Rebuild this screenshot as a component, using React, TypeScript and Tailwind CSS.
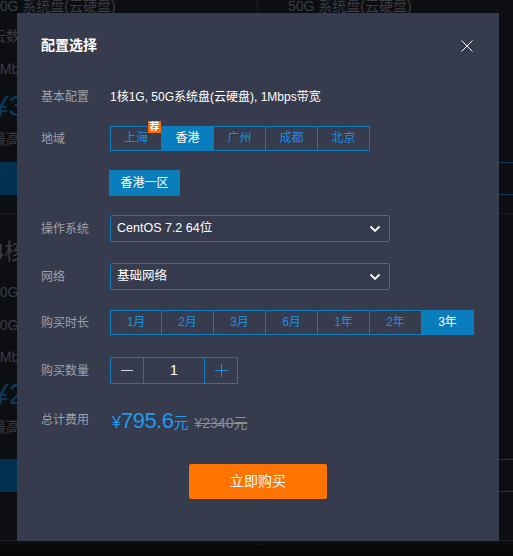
import { useState } from "react";

const FONT = { fontFamily: '"Liberation Sans", "Noto Sans CJK SC", sans-serif' };

const regions = ["上海", "香港", "广州", "成都", "北京"];
const durations = ["1月", "2月", "3月", "6月", "1年", "2年", "3年"];

interface TabGroupProps {
    items: string[];
    active: string;
    onChange: (value: string) => void;
    badge?: string;
}

const TabGroup = ({ items, active, onChange, badge }: TabGroupProps) => (
    <div className="flex">
        {items.map((item, i) => (
            <button
                key={item}
                onClick={() => onChange(item)}
                className={`relative w-[52px] h-[25px] border-y border-r border-[#0b7cc0] text-[12px] leading-[23px] ${
                    i === 0 ? "border-l" : ""
                } ${active === item ? "bg-[#0a7dbd] text-white" : "text-[#1a8fe3]"}`}
            >
                {item}
                {badge === item && (
                    <span className="absolute -top-[6px] right-0 w-[13px] h-[12px] bg-[#ff6a00] text-white text-[10px] leading-[12px] font-bold">
                        荐
                    </span>
                )}
            </button>
        ))}
    </div>
);

const Chevron = () => (
    <svg width="12" height="8" viewBox="0 0 12 8" fill="none">
        <path d="M1.5 1.5 6 6l4.5-4.5" stroke="white" strokeWidth="1.8" />
    </svg>
);

const Select = ({ value }: { value: string }) => (
    <div className="w-[280px] h-[27px] border border-[#0b7cc0] rounded-[2px] flex items-center justify-between pl-[6px] pr-[8px]">
        <span className="text-white text-[12.5px]">{value}</span>
        <Chevron />
    </div>
);

const Row = ({ label, className, children }: { label: string; className: string; children: React.ReactNode }) => (
    <div className={`flex items-center ${className}`}>
        <div className="w-[69px] text-[12px] text-[#9da1ab]">{label}</div>
        {children}
    </div>
);

// dimmed pricing cards behind the dialog
const Card = ({ blueBand, big, hidden }: { blueBand?: boolean; big?: string; hidden?: boolean }) => {
    const line = (text: string) => (hidden ? "" : text);
    return (
        <div className={`flex flex-col pl-[30px] border-b border-[#1b1d23] ${big ? "h-[327px] pt-[24px]" : "h-[218px] -mt-[4px]"}`}>
            {big && <div className="h-[28px] text-[22px] leading-[28px]">{line(`${big} 8G`)}</div>}
            <div className={`h-[20px] leading-[20px] ${big ? "mt-[16px]" : ""}`}>
                {big ? line("50G 系统盘") : "50G 系统盘(云硬盘)"}
            </div>
            {big && <div className="h-[20px] leading-[20px] mt-[13px]">{line("50G 数据盘")}</div>}
            {!big && <div className="h-[20px] leading-[20px] mt-[10px]">{line("云数据库")}</div>}
            <div className={`h-[20px] leading-[20px] ${big ? "mt-[12px]" : "mt-[13px]"}`}>{line("1Mbps")}</div>
            <div className="h-[30px] leading-[30px] text-[30px] text-[#0b3a5c] mt-[12px]">{line(big ? "¥28" : "¥37")}</div>
            <div className="h-[20px] leading-[20px] mt-[8px]">{line("最高可省")}</div>
            <div
                className={`h-[33px] mr-[-40px] flex items-center justify-end pr-[12px] text-[14px] text-[#0b4a72] ${
                    big ? "mt-[22px]" : "mt-[13px]"
                } ${blueBand ? "bg-[#003150]" : "border-y border-[#0a3c5e]"}`}
            >
                {hidden ? "选" : ""}
            </div>
        </div>
    );
};

const Background = () => (
    <div className="flex w-[600px] -ml-[38px] h-[545px] text-[#3a3d44] text-[14px]">
        <div className="w-[296px] border-r border-[#1b1d23] flex flex-col">
            <Card blueBand />
            <Card blueBand big="4核" />
        </div>
        <div className="w-[300px] flex flex-col">
            <Card hidden />
            <Card hidden big="4核" />
        </div>
    </div>
);

export default function App() {
    const [region, setRegion] = useState("香港");
    const [duration, setDuration] = useState("3年");
    const [count, setCount] = useState(1);

    return (
        <div style={FONT} className="relative w-[513px] h-[556px] bg-[#07080a] overflow-hidden">
            <div className="bg-[#0d0e12] h-[545px] overflow-hidden">
                <Background />
            </div>

            <div className="absolute left-[17px] top-[13px] w-[482px] h-[528px] bg-[#363b4d] pl-[24px] flex flex-col">
                <button className="absolute top-[27px] right-[26px] w-[12px] h-[12px]">
                    <svg width="12" height="12" viewBox="0 0 12 12">
                        <path d="M0.5 0.5 11.5 11.5M11.5 0.5 0.5 11.5" stroke="white" strokeWidth="1" />
                    </svg>
                </button>

                <div className="mt-[22px] h-[20px] text-white text-[14px] font-bold leading-[20px]">配置选择</div>

                <Row label="基本配置" className="mt-[32px] h-[20px]">
                    <span className="text-white text-[12px]">1核1G, 50G系统盘(云硬盘), 1Mbps带宽</span>
                </Row>

                <Row label="地域" className="mt-[19px]">
                    <TabGroup items={regions} active={region} onChange={setRegion} badge="上海" />
                </Row>

                <div className="mt-[19px] ml-[68px]">
                    <button className="w-[71px] h-[26px] bg-[#0a7dbd] text-white text-[12px]">香港一区</button>
                </div>

                <Row label="操作系统" className="mt-[19px]">
                    <Select value="CentOS 7.2 64位" />
                </Row>

                <Row label="网络" className="mt-[21px]">
                    <Select value="基础网络" />
                </Row>

                <Row label="购买时长" className="mt-[20px]">
                    <TabGroup items={durations} active={duration} onChange={setDuration} />
                </Row>

                <Row label="购买数量" className="mt-[22px]">
                    <div className="flex h-[27px] border border-[#0b7cc0]">
                        <button
                            onClick={() => setCount(Math.max(1, count - 1))}
                            className="w-[33px] flex items-center justify-center border-r border-[#0b7cc0]"
                        >
                            <span className="block w-[12px] h-[1px] bg-[#d6d8dd]" />
                        </button>
                        <div className="w-[60px] flex items-center justify-center text-white text-[14px]">{count}</div>
                        <button
                            onClick={() => setCount(count + 1)}
                            className="w-[33px] flex items-center justify-center border-l border-[#0b7cc0]"
                        >
                            <svg width="13" height="13" viewBox="0 0 13 13">
                                <path d="M6.5 0v13M0 6.5h13" stroke="#1a8fe3" strokeWidth="1" />
                            </svg>
                        </button>
                    </div>
                </Row>

                <Row label="总计费用" className="mt-[21px] h-[30px]">
                    <div className="flex items-baseline text-[#1e9bf0] ml-[2px]">
                        <span className="text-[16px]">¥</span>
                        <span className="text-[22px] tracking-[-0.5px]">795.6</span>
                        <span className="text-[15px]">元</span>
                        <span className="ml-[6px] text-[14px] text-[#8b8f98] line-through">¥2340元</span>
                    </div>
                </Row>

                <div className="mt-[29px] flex justify-center pr-[24px]">
                    <button className="w-[138px] h-[35px] bg-[#ff7300] rounded-[2px] text-white text-[14px]">立即购买</button>
                </div>
            </div>
        </div>
    );
}
